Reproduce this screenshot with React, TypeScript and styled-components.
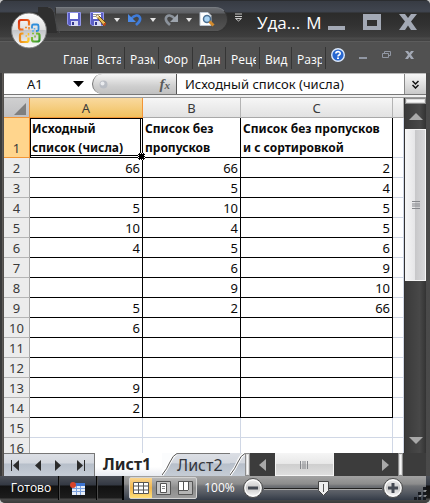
import React from "react";
import styled, { createGlobalStyle, css } from "styled-components";

const uiFont = `"Open Sans", "Noto Sans", sans-serif`;
const sheetFont = `"Noto Sans", "Open Sans", sans-serif`;

const GlobalStyle = createGlobalStyle`
  * { box-sizing: border-box; }
  body { margin: 0; background: #c8c8c8; }
  button, input { font: inherit; color: inherit; margin: 0; padding: 0; border: 0; background: none; border-radius: 0; }
  button { cursor: default; }
  svg { display: block; flex: none; }
`;

const Window = styled.div`
  position: relative;
  display: flex;
  flex-direction: column;
  height: 100vh;
  min-height: 480px;
  overflow: hidden;
  border-radius: 5px;
  background: #4f4f4f;
  font-family: ${uiFont};
  color: #fff;
`;

const TitleBar = styled.header`
  display: flex;
  height: 41px;
  flex: none;
  padding: 6px 13px 0 55px;
  border-top: 1px solid #2b2d30;
  background: linear-gradient(#373b43 0, #40454f 10px, #3c414b 11px, #2c2c2b 12px, #323232 24px, #3e3e3e 36px, #4b4b4b 37px, #424242 40px);
`;

const QuickAccess = styled.div`
  display: flex;
  align-items: center;
  width: 173px;
  height: 25px;
  flex: none;
  padding-left: 10px;
  border: 1px solid #333;
  border-top-color: #777b80;
  border-radius: 0 13px 13px 0;
  background: linear-gradient(#6b6e73 0, #5d5f63 5px, #404040 6px, #565656 24px);
`;

const IconButton = styled.button<{ $w: number }>`
  display: flex;
  align-items: center;
  justify-content: center;
  width: ${(p) => p.$w}px;
  height: 20px;
  flex: none;
`;

const Title = styled.h1`
  display: flex;
  flex: 1;
  gap: 6px;
  margin: 0;
  padding-left: 9px;
  font-size: 17px;
  line-height: 32px;
  font-weight: 400;
  white-space: nowrap;
`;

const WindowButtons = styled.div`
  display: flex;
  align-items: flex-start;
  padding-top: 7px;
  gap: 18px;
  flex: none;
`;

const Orb = styled.button`
  position: absolute;
  left: 11px;
  top: 12px;
`;

const OrbNotch = styled.svg`
  position: absolute;
  left: 38px;
  top: 7px;
`;

const Ribbon = styled.nav`
  display: flex;
  align-items: center;
  height: 32px;
  flex: none;
  padding: 0 16px 0 58px;
  border-top: 1px solid #5c5c5c;
  background: #515151;
`;

const RibbonTab = styled.button<{ $w: number }>`
  width: ${(p) => p.$w}px;
  height: 22px;
  flex: none;
  padding: 3px 3px 0 5px;
  border-right: 1px solid #353535;
  font-size: 12px;
  line-height: 19px;
  text-align: left;

  span { display: block; overflow: hidden; white-space: nowrap; }
`;

const RibbonTools = styled.div`
  display: flex;
  flex: 1;
  align-items: center;
  justify-content: space-between;
  padding: 0 0 6px 5px;
`;

const Body = styled.main`
  display: flex;
  flex-direction: column;
  flex: 1;
  min-height: 0;
  padding: 0 4px;
  background: linear-gradient(90deg, #3a3a3a 0, #3a3a3a 2px, #66625e 2px, #4a4846 4px, #4a4846 50%, #3a3a3a 50%, #4a4a4a);
`;

const FormulaBar = styled.div`
  display: flex;
  height: 21px;
  flex: none;
  background: #fff;
  color: #111;
  font-family: ${sheetFont};
  border-top: 1px solid #bbb;
`;

const NameBox = styled.input`
  width: 61px;
  height: 20px;
  padding-left: 23px;
  font-size: 13px;
  outline: 0;
`;

const FxStrip = styled.div`
  display: flex;
  justify-content: space-between;
  align-items: center;
  width: 85px;
  height: 20px;
  flex: none;
  padding: 0 6px;
  border-left: 1px solid #777;
  border-right: 1px solid #555;
  border-radius: 10px 0 0 10px;
  background: linear-gradient(#f4f4f4, #cfcfcf 60%, #c0c0c0);
`;

const FxButton = styled.button`
  font: italic 700 15px/18px "Liberation Serif", serif;
  color: #5a5a5a;

  small { font-size: 11px; }
`;

const FormulaInput = styled.input`
  flex: 1;
  min-width: 0;
  padding-left: 8px;
  font-size: 13px;
  outline: 0;
`;

const ExpandButton = styled.button`
  display: flex;
  align-items: center;
  justify-content: center;
  width: 22px;
  border-left: 1px solid #888;
  background: linear-gradient(#f6f6f6, #c9c9c9);
`;

const Divider = styled.div`
  height: 4px;
  flex: none;
  border-top: 1px solid #777;
  border-bottom: 1px solid #9a9a9a;
  background: #f0f0f0;
`;

const SheetArea = styled.div`
  display: flex;
  flex: 1;
  min-height: 0;
`;

const GridClip = styled.div`
  flex: 1;
  min-width: 0;
  overflow: hidden;
  background: #fff;
`;

const Grid = styled.table`
  width: 100%;
  table-layout: fixed;
  border-collapse: separate;
  border-spacing: 0;
  font-family: ${sheetFont};
  font-size: 13px;
  line-height: 18px;
  color: #0a0a0a;
`;

const Col = styled.col<{ $w?: number }>`
  ${(p) => p.$w && css`width: ${p.$w}px;`}
`;

const ColumnHead = styled.th<{ $active?: boolean }>`
  height: 20px;
  padding: 0;
  font-weight: 400;
  color: #3a3a3a;
  border-right: 1px solid ${(p) => (p.$active ? "#f29536" : "#b4b4b4")};
  border-bottom: 1px solid ${(p) => (p.$active ? "#f29536" : "#a8a8a8")};
  background: ${(p) => (p.$active ? "linear-gradient(#f9d99f, #f1c15f)" : "linear-gradient(#f6f6f6, #e2e2e2)")};
`;

const Corner = styled.th`
  padding: 0;
  border-right: 1px solid #f29536;
  border-bottom: 1px solid #f29536;
  background: linear-gradient(#cfcfd0, #c0c0c2);

  svg { margin: 2px 0 0 10px; }
`;

const RowHead = styled.th<{ $active?: boolean }>`
  height: ${(p) => (p.$active ? 40 : 20)}px;
  padding: 0;
  font-weight: 400;
  vertical-align: bottom;
  color: #3a3a3a;
  border-right: 1px solid ${(p) => (p.$active ? "#f29536" : "#a8a8a8")};
  border-bottom: 1px solid ${(p) => (p.$active ? "#f29536" : "#b4b4b4")};
  background: ${(p) => (p.$active ? "#ffd58d" : "#ececec")};
`;

const Cell = styled.td<{ $ruled?: boolean }>`
  height: 20px;
  padding: 0 2px;
  text-align: right;
  vertical-align: bottom;
  border-right: 1px solid ${(p) => (p.$ruled ? "#000" : "#d0d7e5")};
  border-bottom: 1px solid ${(p) => (p.$ruled ? "#000" : "#d0d7e5")};
`;

const HeadCell = styled(Cell)<{ $selected?: boolean }>`
  position: relative;
  height: 40px;
  text-align: left;
  font-weight: 700;
  font-size: 12px;
  line-height: 19px;
  white-space: nowrap;
  ${(p) => p.$selected && css`
    box-shadow: inset 1px 1px #000, inset -1px -1px #fff, inset -2px -2px #000;
    &::after {
      content: "";
      position: absolute;
      right: -3px;
      bottom: -3px;
      width: 5px;
      height: 5px;
      background: #000;
      border: 1px dotted #fff;
      z-index: 1;
    }
  `}
`;

const VScroll = styled.div`
  display: flex;
  flex-direction: column;
  width: 22px;
  flex: none;
  border-left: 1px solid #333;
  background: linear-gradient(90deg, #3a3a3a, #484848 70%, #333);
`;

const ScrollButton = styled.button<{ $vertical?: boolean }>`
  display: flex;
  align-items: center;
  justify-content: center;
  flex: none;
  ${(p) => (p.$vertical ? "height: 25px;" : "width: 25px;")}
`;

const SplitHandle = styled.div<{ $vertical?: boolean }>`
  flex: none;
  ${(p) => (p.$vertical ? "height: 6px;" : "width: 5px;")}
  border: 1px solid #8c8c8c;
  background: #f7f7f7;
  box-shadow: inset 0 0 0 1px #ddd;
`;

const Track = styled.div<{ $vertical?: boolean }>`
  display: flex;
  flex: 1;
  min-width: 0;
  min-height: 0;
  flex-direction: ${(p) => (p.$vertical ? "column" : "row")};
`;

const Thumb = styled.div<{ $vertical?: boolean }>`
  display: flex;
  align-items: center;
  justify-content: center;
  border: 1px solid #f5f5f5;
  ${(p) => (p.$vertical
    ? "flex: 0 0 51%; background: linear-gradient(90deg, #f4f4f4, #e6e6e8 45%, #c8c8ca 50%, #d8d8da);"
    : "flex: 0 0 60%; background: linear-gradient(#f4f4f4, #e8e8e8 45%, #cfcfcf 50%, #dedede);")}
`;

const SheetBar = styled.div`
  display: flex;
  height: 23px;
  flex: none;
  padding-right: 23px;
  background: #3c3c3c;
  font-family: ${sheetFont};
`;

const barFill = "linear-gradient(#dcdfe5, #d3d7de 9px, #b7bfca 10px, #c6cdd6)";

const SheetNav = styled.div`
  display: flex;
  align-items: center;
  justify-content: space-between;
  width: 91px;
  flex: none;
  padding: 0 9px 0 7px;
  border-top: 1px solid #777;
  border-right: 1px solid #777;
  background: ${barFill};
`;

const SheetTab = styled.button<{ $active?: boolean }>`
  flex: none;
  width: ${(p) => (p.$active ? 67 : 53)}px;
  padding-left: ${(p) => (p.$active ? 8 : 0)}px;
  font-size: 16px;
  line-height: 21px;
  text-align: left;
  white-space: nowrap;
  font-weight: ${(p) => (p.$active ? 700 : 400)};
  color: ${(p) => (p.$active ? "#252525" : "#33363c")};
  border-top: ${(p) => (p.$active ? "0" : "1px solid #777")};
  background: ${(p) => (p.$active ? "linear-gradient(#fff 60%, #e9ecf2)" : barFill)};
`;

const StatusBar = styled.footer`
  display: flex;
  align-items: stretch;
  height: 27px;
  flex: none;
  padding: 0 4px 3px;
  background: linear-gradient(#4c5058 0, #333842 9px, #111 10px, #1c1c1c 22px, #4a4a4a 23px, #3a3a3a);
  font-size: 12px;
  line-height: 24px;
`;

const StatusItem = styled.div<{ $w: number }>`
  display: flex;
  align-items: center;
  justify-content: center;
  width: ${(p) => p.$w}px;
  flex: none;
  border-right: 1px solid #050505;
  box-shadow: 1px 0 #4a4a4a;
`;

const ZoomArea = styled.div`
  display: flex;
  flex: 1;
  min-width: 0;
  align-items: center;
  margin-left: 25px;
  padding-left: 5px;
  border-left: 2px solid #000;
  background: linear-gradient(#a2a2a2, #8c8c8c 8px, #707276 10px, #50555e 18px, #353c48);
`;

const ViewGroup = styled.div`
  display: flex;
  width: 68px;
  height: 22px;
  flex: none;
  border: 1px solid #d4d4d4;
  border-radius: 2px;
  background: linear-gradient(#b8b8b8, #8c8c8c 50%, #9c9c9c);
`;

const ViewButton = styled.button<{ $active?: boolean }>`
  display: flex;
  flex: 1;
  align-items: center;
  justify-content: center;
  ${(p) => p.$active && "background: linear-gradient(#f9d48e, #f2b64b 50%, #ffe07a);"}
`;

const ZoomLabel = styled.button`
  width: 45px;
  flex: none;
  font-size: 12px;
`;

const handle = encodeURIComponent(
  `<svg xmlns="http://www.w3.org/2000/svg" width="11" height="15"><path d="M.5.5h10v9l-5 5-5-5z" fill="#eee" stroke="#444"/><path d="M5.500 3v8" stroke="#555"/></svg>`
);

const ZoomSlider = styled.input`
  appearance: none;
  flex: 1;
  min-width: 0;
  height: 20px;
  background: linear-gradient(#222, #222) center / 100% 1px no-repeat, linear-gradient(#aaa, #aaa) center 11px / 100% 1px no-repeat;

  &::-webkit-slider-thumb {
    appearance: none;
    width: 11px;
    height: 15px;
    background: url("data:image/svg+xml,${handle}");
  }
`;

const GripSlot = styled.div`
  display: flex;
  align-items: flex-end;
  width: 22px;
  flex: none;
  height: 24px;
  padding-left: 10px;
`;

const Caret = () => (
  <svg width="6" height="4"><path d="M0 0h6L3 4z" fill="#e4e4e4" /></svg>
);

const Arrow = ({ dir }: { dir: "up" | "down" | "left" | "right" }) => {
  const d = { up: "M0 8 7 1l7 7z", down: "M0 1h14L7 8z", left: "M7 0v12L0 6z", right: "M0 0v12l7-6z" }[dir];
  const tall = dir === "left" || dir === "right";
  return <svg width={tall ? 7 : 14} height={tall ? 12 : 9}><path d={d} fill="#a9a9a9" /></svg>;
};

const SaveIcon = ({ pencil = false }: { pencil?: boolean }) => (
  <svg width={pencil ? 17 : 15} height="15">
    <path d="M.5.5h13v13H2l-1.500-1.500z" fill="#5b5fc7" stroke="#9296e8" />
    <path d="M3 1h8v6H3z" fill="#fff" />
    <path d="M4 9h7v5H4z" fill="#d9dcf4" /><path d="M5 10h2v3H5z" fill="#34378f" />
    {pencil && <>
      <path d="M3 2.500h8M3 4.500h6" stroke="#999" />
      <path d="m6 4 2-1 8 8-2 3z" fill="#e8bd55" stroke="#6b4a16" /><path d="m6 4 2-1 1 1-2 2z" fill="#fff0ca" /><path d="m14 11 2 0-1 3-2-1z" fill="#c4451d" />
    </>}
  </svg>
);

const Undo = ({ redo = false }: { redo?: boolean }) => (
  <svg width="14" height="14" viewBox="0 0 14 14">
    <g transform={redo ? "matrix(-1 0 0 1 14 0)" : undefined}>
      <path d="M3 6C6 2 11 1 12 5c1 3-2 5-4 7" fill="none" stroke={redo ? "#8b929b" : "#3f7bd8"} strokeWidth="2.600" />
      <path d="M0 1v8h8z" fill={redo ? "#9da4ad" : "#4c8ae6"} />
    </g>
  </svg>
);

const PreviewIcon = () => (
  <svg width="16" height="15">
    <path d="M1 .5h8l3 3v10H1z" fill="#fff" stroke="#b9c3cf" />
    <circle cx="8" cy="7" r="3.500" fill="#a9d3f3" stroke="#4b6f92" strokeWidth="1.500" />
    <path d="m10.500 9.500 4 4" stroke="#d28a2d" strokeWidth="3" />
  </svg>
);

const OrbArt = () => (
  <svg width="37" height="37" viewBox="0 0 37 37">
    <defs>
      <linearGradient id="orb" x2="0" y2="1">
        <stop stopColor="#fff" /><stop offset=".49" stopColor="#dedede" /><stop offset=".5" stopColor="#c3c5c8" /><stop offset="1" stopColor="#fff" />
      </linearGradient>
      <linearGradient id="orange" x2="1" y2="1"><stop stopColor="#d92f10" /><stop offset="1" stopColor="#f6902a" /></linearGradient>
      <linearGradient id="yellow" x2="1" y2="0"><stop stopColor="#ee8a1c" /><stop offset="1" stopColor="#fcc92c" /></linearGradient>
      <linearGradient id="green" x2="1" y2="1"><stop stopColor="#9ccb3c" /><stop offset="1" stopColor="#2f9328" /></linearGradient>
    </defs>
    <circle cx="18" cy="18.500" r="17.500" fill="url(#orb)" stroke="#777" />
    <g fill="none">
      <path d="M12.500 17.500H10q-2 0-2-2V10q0-2 2-2h6q2 0 2 2v3.500" stroke="url(#orange)" strokeWidth="2.200" />
      <path d="M14 15.500h2M18 15v2.500" stroke="#f08a2c" strokeWidth="1.600" />
      <path d="M21 16.500V14q0-1.500 1.500-1.500H26q1.500 0 1.500 1.500v3.500q0 1.500-1.500 1.500h-1" stroke="#2f8edb" strokeWidth="1.800" />
      <path d="M21 19h2M23.500 16v1.500" stroke="#5fb0ea" strokeWidth="1.600" />
      <path d="M12.500 21.500H11q-2 0-2 2V28q0 2 2 2h4.500q2 0 2-2v-2.500" stroke="url(#yellow)" strokeWidth="2.200" />
      <path d="M14.500 24h1.500M17.500 21v2.500" stroke="#fbbd2c" strokeWidth="1.600" />
      <path d="M21 25v2.500q0 2 2 2h3.500q2 0 2-2v-4q0-2-2-2H25" stroke="url(#green)" strokeWidth="2.200" />
      <path d="M21 21.500h2M24 23.500v2" stroke="#86bf3c" strokeWidth="1.600" />
    </g>
  </svg>
);

const HelpIcon = () => (
  <svg width="14" height="14">
    <circle cx="7" cy="7" r="6.300" fill="#2867d0" stroke="#dce9fb" strokeWidth="1.400" />
    <path d="M4.800 5.500C5 3 9.200 3 9.200 5.400 9.200 7 7 7 7 8.500" fill="none" stroke="#fff" strokeWidth="1.600" /><path d="M6 9.500h2v1.500H6z" fill="#fff" />
  </svg>
);

const Cross = ({ big = false }: { big?: boolean }) => (
  <svg width={big ? 18 : 9} height={big ? 16 : 8} viewBox="0 0 18 16">
    <path d="M0 0h6l3 4 3-4h6l-6 7.500L18 16h-6l-3-4.500L6 16H0l6-8.500z" fill="#a3a9b5" />
  </svg>
);

const NavArrow = ({ flip, bar }: { flip?: boolean; bar?: boolean }) => (
  <svg width="9" height="11">
    <g transform={flip ? "matrix(-1 0 0 1 9 0)" : undefined}>
      <path d="M8 0v11L2 5.500z" fill="#2b2b2b" />{bar && <path d="M.5 0v11" stroke="#2b2b2b" />}
    </g>
  </svg>
);

const TabEdge = ({ active }: { active?: boolean }) => (
  <svg width="15" height="23">
    <defs><linearGradient id="bar" x2="0" y2="1"><stop stopColor="#dcdfe5" /><stop offset=".43" stopColor="#d3d7de" /><stop offset=".47" stopColor="#b7bfca" /><stop offset="1" stopColor="#c6cdd6" /></linearGradient></defs>
    <path d="M0 0h15v23H0z" fill="url(#bar)" />
    <path d="M0 0h15Q11 2 8 9T0 22z" fill={active ? "#fbfcfd" : "url(#bar)"} />
    <path d="M15 .5Q11 2 8 9T0 22" fill="none" stroke="#fff" strokeWidth="3" />
    <path d="M15 .5Q11 2 8 9T0 22" fill="none" stroke="#555" />
  </svg>
);

const ZoomIcon = ({ plus }: { plus?: boolean }) => (
  <svg width="22" height="22">
    <defs><linearGradient id="zoomball" x2="0" y2="1"><stop stopColor="#f7f7f7" /><stop offset=".5" stopColor="#c8c8c8" /><stop offset="1" stopColor="#fff" /></linearGradient></defs>
    <circle cx="11" cy="11" r="9.500" fill="url(#zoomball)" stroke="#4a4a4a" />
    <circle cx="11" cy="11" r="8" fill="none" stroke="#fff" />
    <path d={plus ? "M6 11h10M11 6v10" : "M6 11h10"} stroke="#444952" strokeWidth="3" />
  </svg>
);

const ribbonTabs = [
  { label: "Глав", name: "Главная", w: 34 },
  { label: "Вста", name: "Вставка", w: 33 },
  { label: "Разм", name: "Разметка страницы", w: 34 },
  { label: "Фор", name: "Формулы", w: 34 },
  { label: "Дан", name: "Данные", w: 33 },
  { label: "Реце", name: "Рецензирование", w: 34 },
  { label: "Вид", name: "Вид", w: 32 },
  { label: "Разр", name: "Разработчик", w: 34 },
];

const rows: string[][] = [
  ["66", "66", "2"], ["", "5", "4"], ["5", "10", "5"], ["10", "4", "5"], ["4", "5", "6"], ["", "6", "9"], ["", "9", "10"],
  ["5", "2", "66"], ["6", "", ""], ["", "", ""], ["", "", ""], ["9", "", ""], ["2", "", ""], ["", "", ""], ["", "", ""],
];

const LAST_RULED_ROW = 14;

export default function App() {
  return (
    <>
      <GlobalStyle />
      <Window>
        <TitleBar>
          <QuickAccess>
            <IconButton $w={16} aria-label="Сохранить"><SaveIcon /></IconButton>
            <IconButton $w={32} aria-label="Сохранить как"><SaveIcon pencil /></IconButton>
            <IconButton $w={6} aria-label="Варианты сохранения"><Caret /></IconButton>
            <IconButton $w={30} aria-label="Отменить"><Undo /></IconButton>
            <IconButton $w={6} aria-label="Список отмены"><Caret /></IconButton>
            <IconButton $w={30} aria-label="Вернуть"><Undo redo /></IconButton>
            <IconButton $w={6} aria-label="Список возврата"><Caret /></IconButton>
            <IconButton $w={30} aria-label="Просмотр"><PreviewIcon /></IconButton>
          </QuickAccess>
          <IconButton $w={20} aria-label="Настройка панели">
            <svg width="7" height="9"><path d="M0 1h7M0 3.500h7" stroke="#c9c9c9" /><path d="M.5 5.500h6L3.500 8z" fill="#333" stroke="#c9c9c9" /></svg>
          </IconButton>
          <Title><span>Уда...</span><span>M</span></Title>
          <WindowButtons>
            <button aria-label="Свернуть"><svg width="17" height="17"><path d="M0 12h17v4H0z" fill="#a3a9b5" /></svg></button>
            <button aria-label="Развернуть"><svg width="18" height="17"><path d="M0 0h18v16H0zM4 6v6h10V6z" fill="#a3a9b5" fillRule="evenodd" /></svg></button>
            <button aria-label="Закрыть"><Cross big /></button>
          </WindowButtons>
        </TitleBar>
        <OrbNotch width="22" height="26"><path d="M0 0h10q6 1 7 9l2 17H0z" fill="#2f2f2f" /><path d="M10 0q6 1 7 9 1 12 5 17" fill="none" stroke="#4a4b4d" /></OrbNotch>
        <Orb aria-label="Office"><OrbArt /></Orb>

        <Ribbon>
          {ribbonTabs.map((t) => <RibbonTab key={t.name} $w={t.w} aria-label={t.name}><span>{t.label}</span></RibbonTab>)}
          <RibbonTools>
            <button aria-label="Справка"><HelpIcon /></button>
            <button aria-label="Свернуть книгу"><svg width="8" height="8"><path d="M0 6h8v2H0z" fill="#9197a3" /></svg></button>
            <button aria-label="Восстановить книгу"><svg width="9" height="8"><path d="M2.500 2V.5h6v4H7M.5 2.500h6v4h-6z" fill="none" stroke="#9197a3" /></svg></button>
            <button aria-label="Закрыть книгу"><Cross /></button>
          </RibbonTools>
        </Ribbon>

        <Body>
          <FormulaBar>
            <NameBox aria-label="Имя" defaultValue="A1" />
            <IconButton $w={27} aria-label="Список имён"><svg width="11" height="6"><path d="M0 0h11L5.500 6z" fill="#000" /></svg></IconButton>
            <FxStrip>
              <svg width="9" height="9"><circle cx="4.500" cy="4.500" r="4" fill="#b9bdc4" /><circle cx="3.500" cy="3.500" r="2" fill="#e9ebee" /></svg>
              <FxButton aria-label="Вставить функцию">f<small>x</small></FxButton>
            </FxStrip>
            <FormulaInput aria-label="Строка формул" defaultValue="Исходный список (числа)" />
            <ExpandButton aria-label="Развернуть строку формул">
              <svg width="7" height="9"><path d="m.5 1 3 3 3-3M.5 5l3 3 3-3" fill="none" stroke="#111" strokeWidth="1.500" /></svg>
            </ExpandButton>
          </FormulaBar>
          <Divider />

          <SheetArea>
            <GridClip>
              <Grid>
                <colgroup><Col $w={26} /><Col $w={113} /><Col $w={98} /><Col $w={152} /><Col /></colgroup>
                <thead>
                  <tr>
                    <Corner><svg width="12" height="12"><path d="M12 0v12H0z" fill="#7f7f7f" /></svg></Corner>
                    <ColumnHead $active>A</ColumnHead><ColumnHead>B</ColumnHead><ColumnHead>C</ColumnHead><ColumnHead />
                  </tr>
                </thead>
                <tbody>
                  <tr>
                    <RowHead $active>1</RowHead>
                    <HeadCell $ruled $selected>Исходный<br />список (числа)</HeadCell>
                    <HeadCell $ruled>Список без<br />пропусков</HeadCell>
                    <HeadCell $ruled>Список без пропусков<br />и с сортировкой</HeadCell>
                    <Cell />
                  </tr>
                  {rows.map((r, i) => (
                    <tr key={i}>
                      <RowHead>{i + 2}</RowHead>
                      {r.map((v, j) => <Cell key={j} $ruled={i + 2 <= LAST_RULED_ROW}>{v}</Cell>)}
                      <Cell />
                    </tr>
                  ))}
                </tbody>
              </Grid>
            </GridClip>
            <VScroll>
              <SplitHandle $vertical />
              <ScrollButton $vertical aria-label="Вверх"><Arrow dir="up" /></ScrollButton>
              <Track $vertical>
                <Thumb $vertical><svg width="8" height="8"><path d="M0 .5h8M0 3h8M0 5h8M0 7.500h8" stroke="#85878c" /></svg></Thumb>
              </Track>
              <ScrollButton $vertical aria-label="Вниз"><Arrow dir="down" /></ScrollButton>
            </VScroll>
          </SheetArea>

          <SheetBar>
            <SheetNav>
              <button aria-label="Первый лист"><NavArrow bar /></button>
              <button aria-label="Предыдущий лист"><NavArrow /></button>
              <button aria-label="Следующий лист"><NavArrow flip /></button>
              <button aria-label="Последний лист"><NavArrow flip bar /></button>
            </SheetNav>
            <SheetTab $active>Лист1</SheetTab>
            <TabEdge active />
            <SheetTab>Лист2</SheetTab>
            <TabEdge />
            <SplitHandle />
            <ScrollButton aria-label="Влево"><Arrow dir="left" /></ScrollButton>
            <Track>
              <Thumb><svg width="8" height="8"><path d="M.5 0v8M3 0v8M5 0v8M7.500 0v8" stroke="#85878c" /></svg></Thumb>
            </Track>
            <ScrollButton aria-label="Вправо"><Arrow dir="right" /></ScrollButton>
            <SplitHandle />
          </SheetBar>
        </Body>

        <StatusBar>
          <StatusItem $w={55}>Готово</StatusItem>
          <StatusItem $w={38}>
            <IconButton $w={36} aria-label="Запись макроса">
              <svg width="15" height="13"><path d="M2 1h13v12H2z" fill="#e6edf8" /><path d="M2 1h13v3H2z" fill="#3d74d1" /><path d="M2 6.500h13M2 9.500h13M6.500 4v9M10.500 4v9" stroke="#7ba0de" /><circle cx="3" cy="3" r="3" fill="#d8432a" /></svg>
            </IconButton>
          </StatusItem>
          <ZoomArea>
            <ViewGroup>
              <ViewButton $active aria-label="Обычный"><svg width="16" height="14"><path d="M.5 1.500h15v11H.5zM.5 5h15M.5 9h15M5.500 1v12M10.500 1v12" fill="#fff" stroke="#555" /></svg></ViewButton>
              <ViewButton aria-label="Разметка страницы"><svg width="15" height="14"><path d="M.5.5h14v13H.5z" fill="#c4c4c4" stroke="#555" /><path d="M4.500 2.500h6v9h-6z" fill="#fff" stroke="#555" /><path d="M6 5.500h3M6 7.500h3" stroke="#888" /></svg></ViewButton>
              <ViewButton aria-label="Страничный режим"><svg width="15" height="14"><path d="M.5.5h14v13H.5z" fill="#b4b4b4" stroke="#555" /><path d="M1 1h4v8H1zM6 1h4v8H6z" fill="#fff" /><path d="M5.500 1v8M10.500 1v8M1 9.500h9" stroke="#555" /></svg></ViewButton>
            </ViewGroup>
            <ZoomLabel>100%</ZoomLabel>
            <button aria-label="Уменьшить"><ZoomIcon /></button>
            <ZoomSlider type="range" min="0" max="100" defaultValue="50" aria-label="Масштаб" />
            <button aria-label="Увеличить"><ZoomIcon plus /></button>
            <GripSlot><svg width="13" height="13"><path d="M9 0h3v3H9zM4 5h3v3H4zM9 5h3v3H9zM0 10h3v3H0zM4 10h3v3H4zM9 10h3v3H9z" fill="#15181e" /><path d="M12 3v1h-2M7 8v1H5M12 8v1h-2" stroke="#aaa" fill="none" /></svg></GripSlot>
          </ZoomArea>
        </StatusBar>
      </Window>
    </>
  );
}
